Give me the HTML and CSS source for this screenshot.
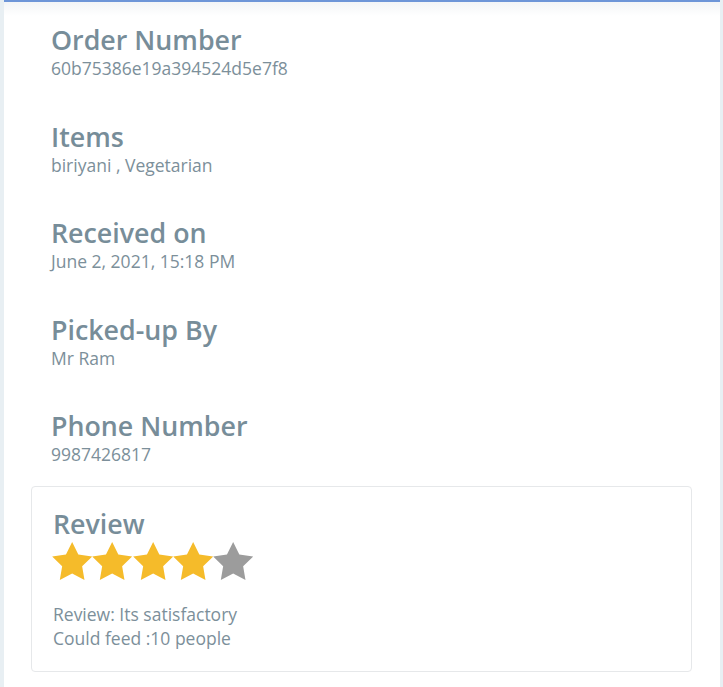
FILE: index.html
```html
<!DOCTYPE html>
<html>
<head>
<meta charset="utf-8">
<link rel="stylesheet" href="styles.css">
</head>
<body>
<div class="panel">
  <div class="field">
    <div class="label">Order Number</div>
    <div class="value">60b75386e19a394524d5e7f8</div>
  </div>
  <div class="field">
    <div class="label">Items</div>
    <div class="value">biriyani , Vegetarian</div>
  </div>
  <div class="field">
    <div class="label">Received on</div>
    <div class="value">June 2, 2021, 15:18 PM</div>
  </div>
  <div class="field">
    <div class="label">Picked-up By</div>
    <div class="value">Mr Ram</div>
  </div>
  <div class="field">
    <div class="label">Phone Number</div>
    <div class="value">9987426817</div>
  </div>
  <div class="card">
    <div class="label">Review</div>
    <div class="stars">
      <svg class="star on" viewBox="2 2 20 19.02"><path d="M12 2l3.09 6.26L22 9.27l-5 4.87 1.18 6.88L12 17.77l-6.18 3.25L7 14.14 2 9.27l6.91-1.010L12 2z"/></svg>
      <svg class="star on" viewBox="2 2 20 19.02"><path d="M12 2l3.09 6.26L22 9.27l-5 4.87 1.18 6.88L12 17.77l-6.18 3.25L7 14.14 2 9.27l6.91-1.010L12 2z"/></svg>
      <svg class="star on" viewBox="2 2 20 19.02"><path d="M12 2l3.09 6.26L22 9.27l-5 4.87 1.18 6.88L12 17.77l-6.18 3.25L7 14.14 2 9.27l6.91-1.010L12 2z"/></svg>
      <svg class="star on" viewBox="2 2 20 19.02"><path d="M12 2l3.09 6.26L22 9.27l-5 4.87 1.18 6.88L12 17.77l-6.18 3.25L7 14.14 2 9.27l6.91-1.010L12 2z"/></svg>
      <svg class="star off" viewBox="2 2 20 19.02"><path d="M12 2l3.09 6.26L22 9.27l-5 4.87 1.18 6.88L12 17.77l-6.18 3.25L7 14.14 2 9.27l6.91-1.010L12 2z"/></svg>
    </div>
    <div class="review-text">
      <div class="value">Review: Its satisfactory</div>
      <div class="value">Could feed :10 people</div>
    </div>
  </div>
</div>
</body>
</html>
```
FILE: styles.css
```css
html, body {
  margin: 0;
  padding: 0;
}
body {
  background: #e8eff3;
  font-family: "Open Sans", "Noto Sans", sans-serif;
  height: 687px;
  overflow: hidden;
}
.panel {
  margin: 0 3px 0 4px;
  background: linear-gradient(#f3f5f7 0, #ffffff 14px);
  border-top: 2px solid #6e96d8;
  padding: 21px 28px 20px 27px;
  min-height: 687px;
  box-sizing: border-box;
}
.field {
  padding-left: 20px;
  margin-bottom: 39.5px;
}
.field:nth-child(5) {
  margin-bottom: 20px;
}
.label {
  font-size: 26.8px;
  font-weight: 600;
  line-height: 33px;
  color: #778d99;
}
.value {
  font-size: 17.5px;
  line-height: 24px;
  color: #7c8f9a;
}
.card {
  border: 1px solid #e6e8ea;
  border-radius: 4px;
  padding: 20px 21px 21px 21px;
}
.card .label {
  line-height: 34px;
}
.stars {
  display: flex;
  height: 40px;
  align-items: center;
  margin-left: -1px;
}
.star {
  width: 40.3px;
  height: 38px;
  display: block;
}
.star.on { fill: #f5bb2a; }
.star.off { fill: #9c9c9c; }
.review-text {
  margin-top: 21px;
}
```
